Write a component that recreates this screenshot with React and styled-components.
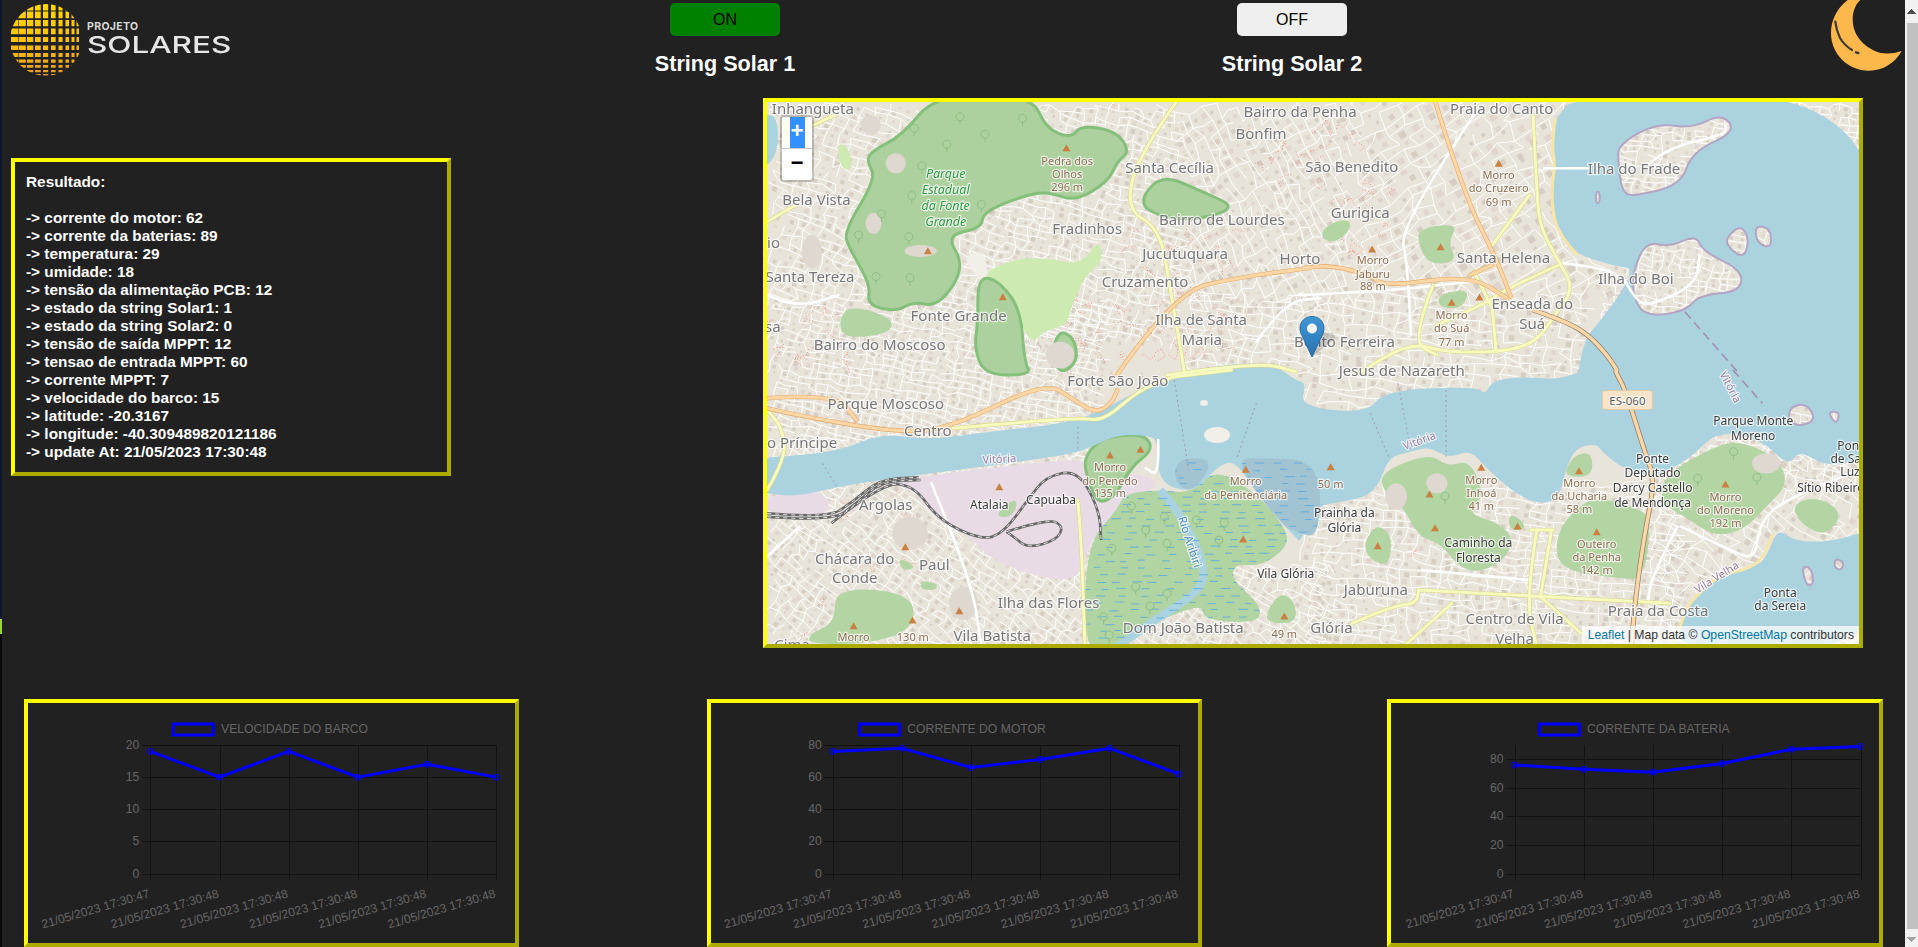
import React from 'react'
import styled, { createGlobalStyle } from 'styled-components'

const GlobalStyle = createGlobalStyle`
  html, body { overflow: hidden; }
  body {
    margin: 0;
    background: #212121;
    color: #fff;
    font-family: "Liberation Sans", Arial, sans-serif;
  }
`

const EdgeStrip = styled.div`
  position: fixed;
  left: 0;
  top: 0;
  width: 2px;
  height: 100%;
  background: linear-gradient(#0b1628 619px, #9ad43a 619px, #9ad43a 634px, #0a0a0a 634px);
`

const ScrollRail = styled.div`
  position: fixed;
  right: 0;
  top: 0;
  bottom: 0;
  width: 13px;
  display: flex;
  flex-direction: column;
  background: #f1f1f1;
`

const ScrollArrow = styled.div`
  flex: none;
  height: ${p => (p.$up ? 23 : 18)}px;
  background: ${p =>
    p.$up
      ? 'conic-gradient(from 138deg at 50% 0, #505050 84deg, transparent 0) 50% 9px / 9px 5px no-repeat'
      : 'conic-gradient(from -42deg at 50% 100%, #a3a3a3 84deg, transparent 0) 50% 8px / 9px 5px no-repeat'};
`

const ScrollThumb = styled.div`
  flex: 1;
  margin-left: 2px;
  background: #c1c1c1;
`

const Page = styled.div`
  width: 1905px;
`

const Header = styled.header`
  display: grid;
  grid-template-columns: 650px 150px 417px 150px 1fr;
  height: 98px;
  overflow: hidden;
`

const Logo = styled.div`
  display: flex;
  align-items: flex-start;
  gap: 6px;
  padding: 3px 0 0 11px;
`

const LogoText = styled.div`
  display: flex;
  flex-direction: column;
  padding-top: 18px;
  font-family: Inter, sans-serif;
  color: #e6e6e6;
`

const LogoSmall = styled.span`
  font-size: 10.5px;
  line-height: 12px;
  font-weight: 700;
  letter-spacing: 0.35px;
  color: #d8d8d8;
`

const LogoBig = styled.span`
  font-size: 23.5px;
  line-height: 24px;
  font-weight: 500;
  transform: scaleX(1.34);
  transform-origin: left center;
  white-space: nowrap;
`

const StringBlock = styled.div`
  display: flex;
  flex-direction: column;
  align-items: center;
  padding-top: 3px;
`

const ToggleButton = styled.button`
  width: 110px;
  height: 33px;
  border: 0;
  border-radius: 5px;
  padding: 0;
  font-family: inherit;
  font-size: 16px;
  color: #000;
  background: ${p => (p.$on ? '#008000' : '#efefef')};
`

const StringLabel = styled.h3`
  margin: 16px 0 0;
  font-size: 21.6px;
  line-height: 24px;
  font-weight: 700;
  white-space: nowrap;
`

const MoonSlot = styled.div`
  display: flex;
  justify-content: flex-end;
  padding-right: 2px;
`

const MainRow = styled.main`
  display: flex;
  align-items: flex-start;
  padding-left: 11px;
`

const ResultCard = styled.section`
  width: 440px;
  height: 318px;
  box-sizing: border-box;
  margin-top: 60px;
  padding: 11px;
  border: 4px outset #ff0;
  font-size: 15.36px;
  line-height: 18px;
  font-weight: 700;
`

const ResultTitle = styled.div`
  margin-bottom: 18px;
`

const ResultLine = styled.div`
  white-space: nowrap;
`

const MapFrame = styled.section`
  position: relative;
  width: 1100px;
  height: 550px;
  box-sizing: border-box;
  margin-left: 312px;
  border: 4px outset #ff0;
  overflow: hidden;
`

const MapSvg = styled.svg`
  display: block;
  width: 1092px;
  height: 542px;
`

const MapLabel = styled.text`
  font-family: "Noto Sans", sans-serif;
  text-anchor: middle;
  dominant-baseline: central;
  paint-order: stroke;
  stroke: rgba(255, 255, 255, 0.72);
  stroke-width: 2.4px;
  stroke-linejoin: round;
  font-size: ${p => p.$size}px;
  fill: ${p => p.$color};
  font-style: ${p => (p.$italic ? 'italic' : 'normal')};
`

const ZoomControl = styled.div`
  position: absolute;
  top: 13px;
  left: 13px;
  width: 30px;
  border: 2px solid rgba(0, 0, 0, 0.2);
  border-radius: 4px;
  background-clip: padding-box;
`

const ZoomButton = styled.div`
  display: flex;
  justify-content: center;
  height: 31px;
  background: #fff;
  color: #000;
  font: 700 22px/31px "Liberation Mono", monospace;
  border-radius: ${p => (p.$top ? '2px 2px 0 0' : '0 0 2px 2px')};
  border-bottom: ${p => (p.$top ? '1px solid #ccc' : '0')};
`

const SelectedGlyph = styled.span`
  width: 15px;
  text-align: center;
  overflow: hidden;
  background: #3390ff;
  color: #fff;
`

const Attribution = styled.div`
  position: absolute;
  right: 0;
  bottom: 0;
  padding: 0 5px 0 6px;
  height: 18px;
  background: rgba(255, 255, 255, 0.7);
  color: #333;
  font-size: 12.2px;
  line-height: 18px;
  white-space: nowrap;
`

const AttributionLink = styled.span`
  color: #0078a8;
`

const ChartsRow = styled.div`
  display: grid;
  grid-template-columns: 683px 680px 496px;
  margin-top: 51px;
  padding-left: 24px;
`

const ChartCard = styled.section`
  width: ${p => p.$width}px;
  height: 248px;
  box-sizing: border-box;
  border: 4px outset #ff0;
`

const ChartSvg = styled.svg`
  display: block;
  width: 100%;
  height: 240px;
  font-family: "Liberation Sans", Arial, sans-serif;
  font-size: 12.2px;
`

const ChartText = styled.text`
  fill: #666;
`

// zoom crops used to read the map off, so points can be written as seen in them
const QUADS = {
  A: [760, 95, 2.8, 3],
  B: [1300, 95, 2.703, 3],
  C: [760, 370, 2.8, 3],
  D: [1300, 370, 2.703, 3],
}

const at = (q, x, y) => {
  const [ox, oy, sx, sy] = QUADS[q]
  return [ox + x / sx, oy + y / sy]
}

const num = n => n.toFixed(1)

// rounds the traced corners with quadratic curves through the segment midpoints
const trace = (str, close = true) => {
  let q = 'A'
  const pts = []
  str.trim().split(/\s+/).forEach(tok => {
    if (QUADS[tok]) {
      q = tok
      return
    }
    const [x, y] = tok.split(',').map(Number)
    pts.push(at(q, x, y))
  })
  const mid = (a, b) => [(a[0] + b[0]) / 2, (a[1] + b[1]) / 2]
  if (close) {
    const n = pts.length
    const start = mid(pts[n - 1], pts[0])
    let d = `M${num(start[0])} ${num(start[1])}`
    pts.forEach((p, i) => {
      const m = mid(p, pts[(i + 1) % n])
      d += `Q${num(p[0])} ${num(p[1])} ${num(m[0])} ${num(m[1])}`
    })
    return d + 'Z'
  }
  let d = `M${num(pts[0][0])} ${num(pts[0][1])}`
  for (let i = 1; i < pts.length - 1; i++) {
    const m = mid(pts[i], pts[i + 1])
    d += `Q${num(pts[i][0])} ${num(pts[i][1])} ${num(m[0])} ${num(m[1])}`
  }
  const last = pts[pts.length - 1]
  return d + `L${num(last[0])} ${num(last[1])}`
}

const makeRandom = seed => () => {
  seed = (seed + 0x6d2b79f5) | 0
  let t = Math.imul(seed ^ (seed >>> 15), 1 | seed)
  t = (t + Math.imul(t ^ (t >>> 7), 61 | t)) ^ t
  return ((t ^ (t >>> 14)) >>> 0) / 4294967296
}

// x0, y0, x1, y1, street angle, block size
const CITY_ZONES = [
  [767, 102, 1000, 300, 20, 10],
  [1000, 102, 1180, 340, 15, 9],
  [1180, 102, 1350, 300, 62, 11],
  [1350, 102, 1600, 300, -32, 14],
  [1180, 290, 1580, 420, 6, 11],
  [767, 300, 1100, 440, 12, 8],
  [767, 440, 1100, 644, 38, 9],
  [1100, 560, 1330, 644, 30, 9],
  [1300, 480, 1680, 644, 6, 10],
  [1650, 440, 1859, 644, 35, 12],
  [1600, 102, 1859, 340, 10, 8],
  [1660, 400, 1859, 480, 12, 9],
]

const buildCity = () => {
  const rand = makeRandom(7)
  let streets = ''
  let blocksA = ''
  let blocksB = ''
  CITY_ZONES.forEach(([x0, y0, x1, y1, deg, gap]) => {
    const a = (deg * Math.PI) / 180
    const cx = (x0 + x1) / 2
    const cy = (y0 + y1) / 2
    const n = Math.ceil(Math.hypot(x1 - x0, y1 - y0) / gap / 2) + 1
    const nodes = {}
    const node = (i, j) => {
      const k = i + ':' + j
      if (!nodes[k]) {
        const u = i * gap * 1.25 + (rand() - 0.5) * gap * 0.7
        const v = j * gap * 0.8 + (rand() - 0.5) * gap * 0.6
        nodes[k] = [cx + u * Math.cos(a) - v * Math.sin(a), cy + u * Math.sin(a) + v * Math.cos(a)]
      }
      return nodes[k]
    }
    const seg = (p, q) => `M${num(p[0])} ${num(p[1])}L${num(q[0])} ${num(q[1])}`
    for (let i = -n; i <= n; i++) {
      for (let j = -n; j <= n; j++) {
        const p = node(i, j)
        if (p[0] < x0 || p[0] > x1 || p[1] < y0 || p[1] > y1) continue
        const right = node(i + 1, j)
        const down = node(i, j + 1)
        if (rand() < 0.74) streets += seg(p, right)
        if (rand() < 0.66) streets += seg(p, down)
        const mx = (right[0] + down[0]) / 2
        const my = (right[1] + down[1]) / 2
        const s = gap * (0.1 + rand() * 0.16)
        const dx = s * Math.cos(a)
        const dy = s * Math.sin(a)
        const box = `M${num(mx - dx + dy)} ${num(my - dy - dx)}l${num(2 * dx)} ${num(2 * dy)}l${num(-2 * dy)} ${num(2 * dx)}l${num(-2 * dx)} ${num(-2 * dy)}z`
        if (rand() < 0.5) blocksA += box
        else blocksB += box
      }
    }
  })
  return { streets, blocksA, blocksB }
}

const buildTrails = () => {
  const rand = makeRandom(21)
  const zones = [
    [1135, 228, 1242, 375, 46],
    [1067, 295, 1128, 375, 22],
    [767, 310, 870, 375, 20],
    [1330, 188, 1392, 252, 16],
    [1300, 120, 1355, 180, 12],
    [1240, 120, 1300, 175, 8],
    [800, 470, 930, 640, 16],
    [1370, 480, 1470, 560, 8],
    [1570, 500, 1640, 560, 6],
  ]
  let d = ''
  zones.forEach(([x0, y0, x1, y1, count]) => {
    for (let i = 0; i < count; i++) {
      let x = x0 + rand() * (x1 - x0)
      let y = y0 + rand() * (y1 - y0)
      d += `M${num(x)} ${num(y)}`
      for (let k = 0; k < 3; k++) {
        x += (rand() - 0.5) * 16
        y += (rand() - 0.5) * 16
        d += `L${num(x)} ${num(y)}`
      }
    }
  })
  return d
}

const buildDashes = (x0, y0, x1, y1) => {
  const rand = makeRandom(3)
  let d = ''
  for (let y = y0; y < y1; y += 7) {
    for (let x = x0 + rand() * 14; x < x1; x += 14 + rand() * 14) {
      d += `M${num(x)} ${num(y + rand() * 2)}h${num(6 + rand() * 4)}`
    }
  }
  return d
}

const CITY = buildCity()
const TRAILS = buildTrails()
const DASHES = buildDashes(1070, 455, 1340, 644)

const WATER = [
  trace('B 745,0 1568,0 1568,840 D 1568,270 1510,270 1420,290 1350,240 1320,290 1250,210 1130,180 1050,270 960,320 880,300 820,250 800,220 745,235 720,290 700,390 640,400 600,380 560,350 500,290 460,240 400,265 350,230 300,245 240,260 215,340 180,380 110,395 40,410 0,520 C 1500,500 1470,470 1390,370 1330,270 1280,290 1215,370 1115,340 1115,210 1080,195 1000,195 930,230 880,250 700,280 480,310 340,330 220,350 100,380 20,370 0,370 0,260 80,260 230,240 340,190 480,210 640,185 900,155 1060,60 1160,15 A 1300,808 1430,805 C 1460,0 1500,30 1530,40 D 0,110 180,130 230,60 480,50 500,75 520,30 620,20 690,30 760,5 B 750,840 770,730 810,680 870,590 900,520 860,515 750,480 710,430 685,370 680,280 690,210 680,150 690,70'),
  trace('D 1290,475 1340,515 1440,515 1568,470 1568,840 1010,840 1030,740 1070,680 1130,615 1240,590 1270,540'),
  trace('A 0,60 50,60 50,180 0,230'),
].join('')

const ISLANDS = [
  trace('B 900,530 935,440 1000,455 1070,420 1090,470 1195,525 1190,590 1080,600 1040,650 930,665 900,600'),
  trace('B 860,150 960,85 1060,100 1140,55 1180,110 1060,170 1030,270 900,305 870,290 860,200'),
  trace('B 1150,430 1190,390 1215,430 1200,490 1160,460'),
  trace('B 1230,390 1272,400 1275,460 1235,445'),
  trace('B 800,290 810,290 810,325 800,325'),
  trace('D 1325,110 1370,100 1395,150 1350,170 1320,150'),
  trace('D 1425,125 1460,125 1450,165'),
  trace('D 1355,590 1380,590 1390,640 1370,650'),
  trace('D 1445,565 1470,575 1465,600 1445,595'),
].join('')

const GRAY_WATER = [
  'C 1165,265 1275,265 1215,370 1160,340',
  'C 1400,265 1568,270 1568,510 1490,480 1470,470 1390,370 1335,265',
  'D 0,290 30,290 50,350 0,460',
].map(s => trace(s)).join('')

const FOREST = [
  'A 490,0 760,0 800,100 870,130 900,90 1000,110 1035,170 1000,200 975,260 880,320 810,290 745,300 625,350 620,400 520,420 575,515 500,635 430,620 380,650 300,630 310,570 250,460 235,410 325,250 300,200 310,170 400,120',
  'A 610,550 660,550 730,640 740,800 760,840 630,840 600,760 610,680',
  'A 840,705 880,730 890,800 840,840 815,770',
  'A 1070,300 1130,240 1240,290 1340,340 1200,380 1080,350',
  'C 905,265 950,210 1010,195 1080,195 1100,240 1040,290 1000,370 950,405 920,340',
]

const GREEN = [
  'A 230,640 300,640 380,680 350,720 220,730',
  'B 320,400 430,385 400,440 425,500 350,510 320,450',
  'B 55,430 70,390 130,370 140,400 95,445',
  'B 370,600 460,580 440,640 380,640',
  'C 210,650 430,670 430,780 300,822 135,822 140,790 210,760',
  'C 385,560 440,590 400,605',
  'C 450,630 495,640 495,660 450,660',
  'C 1420,720 1460,665 1500,700 1500,760 1420,760',
  'C 660,430 720,380 715,430 680,445',
  'D 230,300 350,250 400,290 460,270 500,380 450,430 540,460 580,510 545,580 470,610 420,580 380,520 320,500 285,420 215,350',
  'D 720,290 750,250 790,250 790,320 720,320',
  'D 690,500 740,420 800,380 900,410 950,440 930,630 860,625 700,600',
  'D 980,320 1100,240 1180,210 1290,260 1320,340 1270,400 1200,480 1120,500 1040,440 975,400',
  'D 170,520 210,460 250,500 240,590 190,570',
  'D 35,290 100,240 122,270 90,320 40,320',
  'D 1330,400 1400,380 1470,430 1420,500 1350,460',
  'D 565,430 600,450 610,480 565,480',
]

const LIGHT_GREEN = [
  'A 630,530 720,490 810,490 900,510 950,430 960,500 910,540 870,640 860,690 790,710 760,750 710,640 640,560',
  'A 470,410 515,405 530,470 575,510 520,510 470,470',
  'A 910,160 965,145 1030,190 970,205',
  'A 215,140 250,160 260,225 225,220',
]

const PLAIN_LAND = [
  'A 570,480 630,470 640,560 700,640 600,540',
  'C 530,400 590,330 720,330 750,380 700,470 600,490 540,450',
  'A 380,470 460,450 470,480 400,490',
]

const INDUSTRIAL = [
  'C 300,340 900,260 910,290 1100,320 1110,350 1000,420 920,520 890,640 740,610 640,560 600,510 480,440 430,350',
  'C 20,370 180,360 200,440 20,440',
]

const WETLAND = trace('C 915,520 1000,420 1020,370 1120,360 1210,370 1275,295 1390,370 1470,470 1480,530 1400,590 1330,580 1320,630 1400,700 1400,760 1240,750 1240,700 1110,755 1020,800 990,840 905,840')

const ROCKS = [
  ['A', 380, 205, 28, 30], ['A', 318, 385, 22, 32], ['A', 145, 470, 28, 50], ['A', 310, 90, 28, 30],
  ['A', 450, 468, 45, 18], ['A', 840, 780, 40, 40], ['B', 1100, 200, 60, 20], ['D', 1260, 280, 40, 30],
  ['D', 370, 340, 30, 30], ['D', 260, 380, 30, 40], ['C', 420, 490, 50, 50], ['C', 570, 700, 40, 50],
]

const PRIMARY_ROADS = [
  'A 1000,840 1160,590 1350,545 1568,515 B 0,520 80,510 190,540 230,575 460,540 560,610',
  'B 360,0 440,290 530,490 570,605',
  'B 460,540 520,510',
  'C 20,115 120,140 400,190 540,170 800,35 880,90 940,130 985,100 1000,60',
  'C 20,85 210,70 270,150',
]

const SECONDARY_ROADS = [
  'A 1180,0 1070,160 1020,340 1120,400 1150,590 1190,840',
  'A 1140,840 1400,800 1500,830',
  'C 1160,20 1320,0',
  'C 540,175 890,140 960,155 1060,60 1160,20',
  'A 20,380 100,330',
  'A 150,90 210,60',
  'C 20,360 75,260 60,170 20,120',
  'C 890,390 900,520 905,690 910,830',
  'B 630,60 640,300 650,400 700,500 740,580 690,660 620,765 400,775 300,740 150,840',
  'B 360,570 300,740 370,780',
  'B 520,640 530,770',
  'B 700,510 560,580 510,620 370,690',
  'B 620,300 520,450',
  'B 470,530 520,640',
  'D 320,660 1000,700',
  'D 320,660 320,700 260,705 140,760',
  'D 410,700 280,830',
  'D 640,480 610,690 640,830',
  'D 680,480 650,680',
  'D 625,480 685,480',
  'D 650,680 760,790',
]

const WHITE_ROADS = [
  'A 1390,740 1470,620 1568,610',
  'B 0,600 210,590 460,560',
  'B 470,60 270,390 290,510 300,720',
  'C 20,560 110,470',
  'C 480,340 590,620 620,830',
  'D 1030,470 1160,540 1230,570 1240,470 1290,400 1510,300',
  'D 1020,470 950,620 940,700',
  'D 330,600 620,630',
  'B 710,505 860,520 905,610 940,635 1070,570 1080,480',
  'B 950,200 1000,155 1150,120 1150,90',
  'B 660,220 780,220',
  'A 20,600 100,640 220,600',
  'C 1115,210 1118,320 1080,295',
]

const RAILS = [
  'C 20,440 200,455 270,400 340,335 450,330',
  'C 20,430 190,445 260,395 335,328 445,322',
  'C 200,460 340,340 430,345 500,450 620,510 680,490 750,390 800,320 890,300 950,420 955,510',
  'C 690,485 810,445 850,470 830,510 750,535 710,500 690,485',
]

const FERRY_LINES = ['B 1040,650 1190,840', 'D 1170,0 1250,100']

const BOAT_LINES = [
  'C 1160,30 1200,300',
  'C 1390,100 1335,265',
  'C 890,170 890,240',
  'C 175,280 215,350',
  'D 190,130 240,260',
  'D 265,40 300,240',
  'D 395,60 395,260',
]

const PEAKS = [
  ['A', 858, 158], ['A', 470, 467], ['A', 680, 605], ['B', 537, 205], ['B', 195, 462], ['B', 380, 455],
  ['B', 410, 622], ['B', 485, 606], ['C', 670, 350], ['C', 980, 255], ['C', 1065, 238], ['C', 1360, 298],
  ['C', 407, 530], ['C', 558, 722], ['C', 262, 767], ['C', 427, 750], ['C', 1353, 507], ['C', 1468, 738],
  ['D', 83, 290], ['D', 490, 292], ['D', 350, 372], ['D', 365, 473], ['D', 588, 468], ['D', 754, 302],
  ['D', 802, 485], ['D', 1150, 342], ['D', 210, 527],
]

const TREES = [
  ['A', 560, 65], ['A', 735, 70], ['A', 630, 118], ['A', 523, 148], ['A', 432, 100], ['A', 453, 212],
  ['A', 425, 302], ['A', 340, 356], ['A', 276, 420], ['A', 417, 425], ['A', 620, 328], ['A', 420, 548],
  ['A', 325, 545], ['C', 1040, 408], ['C', 1132, 440], ['C', 1222, 450], ['C', 1300, 458], ['C', 1080, 480],
  ['C', 1140, 520], ['C', 985, 535], ['C', 1285, 510], ['C', 1140, 670], ['C', 1052, 650], ['C', 1092, 708],
  ['C', 962, 740], ['C', 978, 795], ['D', 392, 378], ['D', 1075, 325], ['D', 1235, 322], ['D', 1172, 245],
]

const LABELS = {
  place: {
    size: 15,
    color: '#777',
    items: [
      ['A', 148, 40, 'Inhangueta'], ['B', 0, 48, 'Bairro da Penha'], ['A', 1403, 113, 'Bonfim'],
      ['A', 1147, 215, 'Santa Cecília'], ['B', 140, 213, 'São Benedito'], ['A', 158, 313, 'Bela Vista'],
      ['A', 1293, 372, 'Bairro de Lourdes'], ['A', 916, 400, 'Fradinhos'], ['A', 1190, 475, 'Jucutuquara'],
      ['B', 0, 490, 'Horto'], ['A', 1078, 558, 'Cruzamento'], ['A', 140, 543, 'Santa Tereza'],
      ['A', 38, 440, 'io'], ['A', 36, 693, 'sa'], ['A', 556, 660, 'Fonte Grande'], ['A', 1235, 672, 'Ilha de Santa'],
      ['A', 1237, 732, 'Maria'], ['A', 335, 747, 'Bairro do Moscoso'], ['B', 120, 737, 'Bento Ferreira'],
      ['B', 163, 352, 'Gurigica'], ['B', 550, 485, 'Santa Helena'], ['B', 903, 220, 'Ilha do Frade'],
      ['B', 545, 38, 'Praia do Canto'], ['B', 908, 550, 'Ilha do Boi'], ['B', 628, 625, 'Enseada do'],
      ['B', 628, 685, 'Suá'], ['B', 275, 825, 'Jesus de Nazareth'], ['C', 1002, 30, 'Forte São João'],
      ['C', 352, 100, 'Parque Moscoso'], ['C', 470, 180, 'Centro'], ['C', 105, 215, 'do Príncipe'],
      ['C', 352, 402, 'Argolas'], ['C', 265, 563, 'Chácara do'], ['C', 265, 622, 'Conde'], ['C', 488, 583, 'Paul'],
      ['C', 808, 695, 'Ilha das Flores'], ['C', 650, 795, 'Vila Batista'], ['C', 1185, 772, 'Dom João Batista'],
      ['C', 90, 822, 'Cima'], ['D', 205, 658, 'Jaburuna'], ['D', 968, 720, 'Praia da Costa'],
      ['D', 580, 745, 'Centro de Vila'], ['D', 580, 805, 'Velha'], ['D', 85, 772, 'Glória'],
    ],
  },
  peak: {
    size: 11,
    color: '#8f6d50',
    items: [
      ['A', 860, 195, 'Pedra dos'], ['A', 860, 235, 'Olhos'], ['A', 860, 275, '296 m'],
      ['B', 537, 238, 'Morro'], ['B', 537, 278, 'do Cruzeiro'], ['B', 537, 318, '69 m'],
      ['B', 197, 494, 'Morro'], ['B', 197, 534, 'Jaburu'], ['B', 197, 572, '88 m'],
      ['B', 410, 658, 'Morro'], ['B', 410, 698, 'do Suá'], ['B', 410, 738, '77 m'],
      ['C', 262, 798, 'Morro'], ['C', 428, 800, '130 m'], ['C', 980, 290, 'Morro'], ['C', 980, 330, 'do Penedo'],
      ['C', 980, 368, '135 m'], ['C', 1360, 332, 'Morro'], ['C', 1360, 372, 'da Penitenciária'],
      ['C', 1468, 790, '49 m'], ['D', 83, 340, '50 m'], ['D', 490, 327, 'Morro'], ['D', 490, 367, 'Inhoá'],
      ['D', 490, 405, '41 m'], ['D', 755, 337, 'Morro'], ['D', 755, 376, 'da Ucharia'], ['D', 755, 415, '58 m'],
      ['D', 1150, 378, 'Morro'], ['D', 1150, 417, 'do Moreno'], ['D', 1150, 457, '192 m'],
      ['D', 802, 520, 'Outeiro'], ['D', 802, 558, 'da Penha'], ['D', 802, 597, '142 m'],
    ],
  },
  dark: {
    size: 12,
    color: '#3c3c3c',
    items: [
      ['C', 642, 403, 'Atalaia'], ['C', 815, 388, 'Capuaba'], ['C', 1472, 610, 'Vila Glória'],
      ['D', 1225, 150, 'Parque Monte'], ['D', 1225, 197, 'Moreno'], ['D', 953, 265, 'Ponte'],
      ['D', 953, 308, 'Deputado'], ['D', 953, 352, 'Darcy Castello'], ['D', 953, 397, 'de Mendonça'],
      ['D', 120, 427, 'Prainha da'], ['D', 120, 472, 'Glória'], ['D', 482, 517, 'Caminho da'],
      ['D', 482, 562, 'Floresta'], ['D', 1298, 667, 'Ponta'], ['D', 1298, 705, 'da Sereia'],
      ['D', 1435, 352, 'Sítio Ribeiro'], ['D', 1497, 225, 'Ponta'], ['D', 1500, 265, 'de Santa'], ['D', 1500, 305, 'Luzia'],
    ],
  },
  park: {
    size: 12.5,
    color: '#2f9e44',
    italic: true,
    items: [
      ['A', 520, 235, 'Parque'], ['A', 520, 283, 'Estadual'], ['A', 520, 330, 'da Fonte'], ['A', 520, 378, 'Grande'],
    ],
  },
}

const TILTED_LABELS = [
  ['C', 670, 265, 'Vitória', -3, '#9c7fa8', 11],
  ['D', 322, 210, 'Vitória', -20, '#9c7fa8', 11],
  ['D', 1165, 50, 'Vitória', 62, '#9c7fa8', 11],
  ['D', 1125, 620, 'Vila Velha', -32, '#9c7fa8', 11],
  ['C', 1205, 515, 'Rio Aribiri', 72, '#4a8bc2', 11.5],
]

const MapLabels = () => (
  <g filter="url(#label-soft)">
    {Object.entries(LABELS).map(([kind, group]) =>
      group.items.map(([q, x, y, text]) => {
        const [px, py] = at(q, x, y)
        return (
          <MapLabel key={kind + text + x + y} x={px} y={py} $size={group.size} $color={group.color} $italic={group.italic}>
            {text}
          </MapLabel>
        )
      })
    )}
    {TILTED_LABELS.map(([q, x, y, text, deg, color, size]) => {
      const [px, py] = at(q, x, y)
      return (
        <MapLabel key={text + x} x={px} y={py} $size={size} $color={color} transform={`rotate(${deg} ${px} ${py})`}>
          {text}
        </MapLabel>
      )
    })}
  </g>
)

const Road = ({ list, fill, casing, width }) => (
  <g fill="none" strokeLinejoin="round" strokeLinecap="round">
    {list.map(r => <path key={r} d={trace(r, false)} stroke={casing} strokeWidth={width + 1.2} />)}
    {list.map(r => <path key={r} d={trace(r, false)} stroke={fill} strokeWidth={width} />)}
  </g>
)

const Shapes = ({ list, ...rest }) => (
  <g {...rest}>
    {list.map(s => <path key={s} d={trace(s)} />)}
  </g>
)

const MapMarker = () => (
  <g transform="translate(1299.5 316)">
    <path d="M12 41 L34 24 Q38 19 32 17 L22 16 Z" fill="#000" opacity=".16" filter="url(#tile-soft)" />
    <path
      d="M12.5 .5C5.6.5 .5 5.6 .5 12.3c0 2.6.8 5 2 7.2L12.5 41l10-21.5c1.2-2.2 2-4.6 2-7.2C24.5 5.6 19.4 .5 12.5 .5Z"
      fill="url(#pin)"
      stroke="#2b6ca5"
    />
    <circle cx="12.5" cy="12.5" r="5" fill="#fff" />
  </g>
)

const BRIDGE = trace('B 630,645 720,680 780,720 830,780 860,830 D 850,0 880,60 930,240 960,330 930,500 905,700 895,840', false)

const OsmMap = () => {
  const [ex, ey] = at('D', 885, 90)
  return (
    <MapSvg viewBox="767 102 1092 542">
      <defs>
        <filter id="tile-soft" x="-5%" y="-5%" width="110%" height="110%">
          <feGaussianBlur stdDeviation="0.55" />
        </filter>
        <filter id="label-soft" x="-5%" y="-5%" width="110%" height="110%">
          <feGaussianBlur stdDeviation="0.25" />
        </filter>
        <clipPath id="wetland-clip">
          <path d={WETLAND + GRAY_WATER} />
        </clipPath>
        <linearGradient id="pin" x1="0" y1="0" x2="0" y2="1">
          <stop offset="0" stopColor="#3f97d6" />
          <stop offset="1" stopColor="#2673b0" />
        </linearGradient>
      </defs>
      <g filter="url(#tile-soft)">
        <rect x="767" y="102" width="1092" height="542" fill="#e9e4da" />
        <path d={CITY.blocksA} fill="#d6cdc3" />
        <path d={CITY.blocksB} fill="#e0d6ce" />
        <path d={CITY.streets} stroke="#fff" strokeWidth="1" fill="none" />
        <path d={TRAILS} stroke="#f08070" strokeWidth="0.8" strokeDasharray="1 2" fill="none" />
        <Shapes list={PLAIN_LAND} fill="#f2efe9" />
        <Shapes list={INDUSTRIAL} fill="#e9dbe6" />
        <Shapes list={GREEN} fill="#b3d5a3" />
        <Shapes list={LIGHT_GREEN} fill="#cdebb0" />
        <Shapes list={FOREST} fill="#add19e" stroke="#85bf7c" strokeWidth="3" strokeLinejoin="round" />
        {ROCKS.map(([q, x, y, rx, ry]) => {
          const [px, py] = at(q, x, y)
          return <ellipse key={q + x + y} cx={px} cy={py} rx={rx / 2.8} ry={ry / 3} fill="#ded8d0" />
        })}
        <path d={WETLAND} fill="#b0d4a2" />
        <path d={WATER + ISLANDS} fill="#aad3df" fillRule="evenodd" />
        <path d={ISLANDS} fill="none" stroke="#b3a5c4" strokeWidth="2" strokeLinejoin="round" />
        <path d={GRAY_WATER} fill="#a2c3d1" />
        <path d={trace('C 1120,360 1170,420 1220,520 1250,620 1210,680 1090,760 990,840', false)} fill="none" stroke="#aad3df" strokeWidth="8" />
        <path d={DASHES} stroke="#56a8e2" strokeWidth="1" opacity="0.8" fill="none" clipPath="url(#wetland-clip)" />
        <ellipse cx="1217" cy="435" rx="13" ry="8" fill="#f2efe9" />
        <ellipse cx="1204" cy="403" rx="4" ry="3" fill="#f2efe9" />
        <g fill="none" stroke="#a38fb5">
          {FERRY_LINES.map(l => <path key={l} d={trace(l, false)} strokeWidth="1.6" strokeDasharray="9 5" />)}
          {BOAT_LINES.map(l => <path key={l} d={trace(l, false)} strokeWidth="0.9" strokeDasharray="2 3" />)}
        </g>
        <path d={trace('B 690,70 680,150 690,210 680,280 685,370 710,430 750,480', false)} fill="none" stroke="#f5e6a8" strokeWidth="3" />
        <path d={trace('D 1010,830 1040,720 1070,680 1130,615 1240,590 1280,490', false)} fill="none" stroke="#f5e6a8" strokeWidth="3" />
        <Road list={WHITE_ROADS} fill="#fff" casing="#fff" width={1.4} />
        <g fill="none" strokeLinejoin="round">
          {RAILS.map(r => <path key={r} d={trace(r, false)} stroke="#666" strokeWidth="2.6" />)}
          {RAILS.map(r => <path key={r} d={trace(r, false)} stroke="#e8e8e8" strokeWidth="1" strokeDasharray="4 4" />)}
        </g>
        <Road list={SECONDARY_ROADS} fill="#f7fabf" casing="#d9d68f" width={3} />
        <Road list={PRIMARY_ROADS} fill="#fcd6a4" casing="#e6ab6c" width={3.2} />
        <path d={BRIDGE} fill="none" stroke="#8c7a66" strokeWidth="5" />
        <path d={BRIDGE} fill="none" stroke="#fcd6a4" strokeWidth="3.6" />
        <g fill="#c9803f">
          {PEAKS.map(([q, x, y]) => {
            const [px, py] = at(q, x, y)
            return <path key={q + x + y} d={`M${px} ${py - 3.5}l4 7h-8z`} />
          })}
        </g>
        <g fill="none" stroke="#8fbf85" strokeWidth="1">
          {TREES.map(([q, x, y]) => {
            const [px, py] = at(q, x, y)
            return <path key={q + x + y} d={`M${px} ${py + 8}v-4a4 4 0 1 0-.01 0`} />
          })}
        </g>
      </g>
      <MapLabels />
      <rect x={ex - 25} y={ey - 9.5} width="50" height="19" rx="2.5" fill="#f6e3c8" stroke="#e6c9a0" />
      <MapLabel x={ex} y={ey} $size={11.5} $color="#5c5c5c">ES-060</MapLabel>
      <MapMarker />
    </MapSvg>
  )
}

const ChartBox = ({ title, data, max, ticks, plotLeft, legendLeft, legendText }) => {
  const top = 42
  const bottom = 170.5
  const stepX = 69.2
  const toY = v => bottom - (v / max) * (bottom - top)
  const xs = data.map((_, i) => plotLeft + i * stepX)
  const line = data.map((v, i) => `${i ? 'L' : 'M'}${xs[i]} ${toY(v)}`).join('')
  const stamps = ['21/05/2023 17:30:47', ...Array(5).fill('21/05/2023 17:30:48')]
  return (
    <ChartSvg viewBox="0 0 487 240" preserveAspectRatio="xMinYMin">
      <rect x={legendLeft + 1.5} y="21" width="40" height="11" fill="none" stroke="#00f" strokeWidth="3" />
      <ChartText x={legendText} y="29.5">{title}</ChartText>
      <g stroke="#131313" strokeWidth="1">
        {xs.map(x => <line key={x} x1={Math.round(x) + 0.5} x2={Math.round(x) + 0.5} y1={top} y2={bottom + 7} />)}
        {ticks.map(t => <line key={t} x1={plotLeft - 8} x2={plotLeft + 5 * stepX} y1={Math.round(toY(t)) + 0.5} y2={Math.round(toY(t)) + 0.5} />)}
      </g>
      {ticks.map(t => (
        <ChartText key={t} x={plotLeft - 11} y={toY(t) + 4} textAnchor="end">{t}</ChartText>
      ))}
      {xs.map((x, i) => (
        <ChartText key={x} x={x} y="194" textAnchor="end" transform={`rotate(-16.4 ${x} 194)`}>{stamps[i]}</ChartText>
      ))}
      <path d={line} fill="none" stroke="#00f" strokeWidth="3" />
      {xs.map((x, i) => (
        <circle key={x} cx={x} cy={toY(data[i])} r="3" fill="rgba(0,0,255,.15)" stroke="#00f" strokeWidth="1" />
      ))}
    </ChartSvg>
  )
}

const CHARTS = [
  { title: 'VELOCIDADE DO BARCO', data: [19, 15, 19, 15, 17, 15], max: 20, ticks: [0, 5, 10, 15, 20], plotLeft: 122.3, legendLeft: 143.7, legendText: 193, width: 495 },
  { title: 'CORRENTE DO MOTOR', data: [76, 78, 66, 71, 78, 62], max: 80, ticks: [0, 20, 40, 60, 80], plotLeft: 121.7, legendLeft: 147, legendText: 196.3, width: 495 },
  { title: 'CORRENTE DA BATERIA', data: [76, 73, 71, 77, 87, 89], max: 90, ticks: [0, 20, 40, 60, 80], plotLeft: 123.5, legendLeft: 146.9, legendText: 196, width: 496 },
]

const RESULT_LINES = [
  'corrente do motor: 62',
  'corrente da baterias: 89',
  'temperatura: 29',
  'umidade: 18',
  'tensão da alimentação PCB: 12',
  'estado da string Solar1: 1',
  'estado da string Solar2: 0',
  'tensão de saída MPPT: 12',
  'tensao de entrada MPPT: 60',
  'corrente MPPT: 7',
  'velocidade do barco: 15',
  'latitude: -20.3167',
  'longitude: -40.309489820121186',
  'update At: 21/05/2023 17:30:48',
]

const SunLogo = () => {
  const xs = [0, 8, 16, 24, 32, 40, 47.5, 54.5, 60.5, 65.5]
  const ys = [0, 8.5, 17, 25.5, 34, 42.5, 50, 56.5, 62, 67, 71]
  return (
    <svg width="70" height="75" viewBox="0 0 70 75">
      <defs>
        <clipPath id="sun-clip">
          <circle cx="35" cy="37" r="36" />
        </clipPath>
        <linearGradient id="sun-fill" x1="0" y1="0" x2="0" y2="1">
          <stop offset="0" stopColor="#ffd800" />
          <stop offset="0.55" stopColor="#fbc00c" />
          <stop offset="1" stopColor="#e99a1a" />
        </linearGradient>
      </defs>
      <g clipPath="url(#sun-clip)" fill="url(#sun-fill)">
        <path
          d={xs.flatMap((x, i) => ys.map((y, j) => `M${x} ${y}h${7.4 - i * 0.55}v${7.4 - j * 0.58}h${-(7.4 - i * 0.55)}z`)).join('')}
        />
      </g>
    </svg>
  )
}

const Moon = () => (
  <svg width="72" height="72" viewBox="0 0 72 72">
    <path
      d="M16.7 0C5 9 0 21 0 33c0 21 17 37.7 38 37.7 14 0 26-7.7 32.7-19.7-7 2.5-14.7 3-20.7 2C35 49 22 37 21.7 20 21.5 12 24 5 29.3 0Z"
      fill="#fdb84b"
    />
    <path d="M4.3 21.7C5 28 6.5 33 9 38c3 5 7 9 12 12" fill="none" stroke="#3a3a3a" strokeWidth="2.2" strokeLinecap="round" />
    <path d="M25 52.3l2.3.7" fill="none" stroke="#3a3a3a" strokeWidth="2.4" strokeLinecap="round" />
  </svg>
)

export default function App() {
  return (
    <>
      <GlobalStyle />
      <EdgeStrip />
      <ScrollRail>
        <ScrollArrow $up />
        <ScrollThumb />
        <ScrollArrow />
      </ScrollRail>
      <Page>
        <Header>
          <Logo>
            <SunLogo />
            <LogoText>
              <LogoSmall>PROJETO</LogoSmall>
              <LogoBig>SOLARES</LogoBig>
            </LogoText>
          </Logo>
          <StringBlock>
            <ToggleButton $on>ON</ToggleButton>
            <StringLabel>String Solar 1</StringLabel>
          </StringBlock>
          <div />
          <StringBlock>
            <ToggleButton>OFF</ToggleButton>
            <StringLabel>String Solar 2</StringLabel>
          </StringBlock>
          <MoonSlot>
            <Moon />
          </MoonSlot>
        </Header>
        <MainRow>
          <ResultCard>
            <ResultTitle>Resultado:</ResultTitle>
            {RESULT_LINES.map(line => (
              <ResultLine key={line}>-&gt; {line}</ResultLine>
            ))}
          </ResultCard>
          <MapFrame>
            <OsmMap />
            <ZoomControl>
              <ZoomButton $top><SelectedGlyph>+</SelectedGlyph></ZoomButton>
              <ZoomButton>−</ZoomButton>
            </ZoomControl>
            <Attribution>
              <AttributionLink>Leaflet</AttributionLink> | Map data © <AttributionLink>OpenStreetMap</AttributionLink> contributors
            </Attribution>
          </MapFrame>
        </MainRow>
        <ChartsRow>
          {CHARTS.map(c => (
            <ChartCard key={c.title} $width={c.width}>
              <ChartBox {...c} />
            </ChartCard>
          ))}
        </ChartsRow>
      </Page>
    </>
  )
}
